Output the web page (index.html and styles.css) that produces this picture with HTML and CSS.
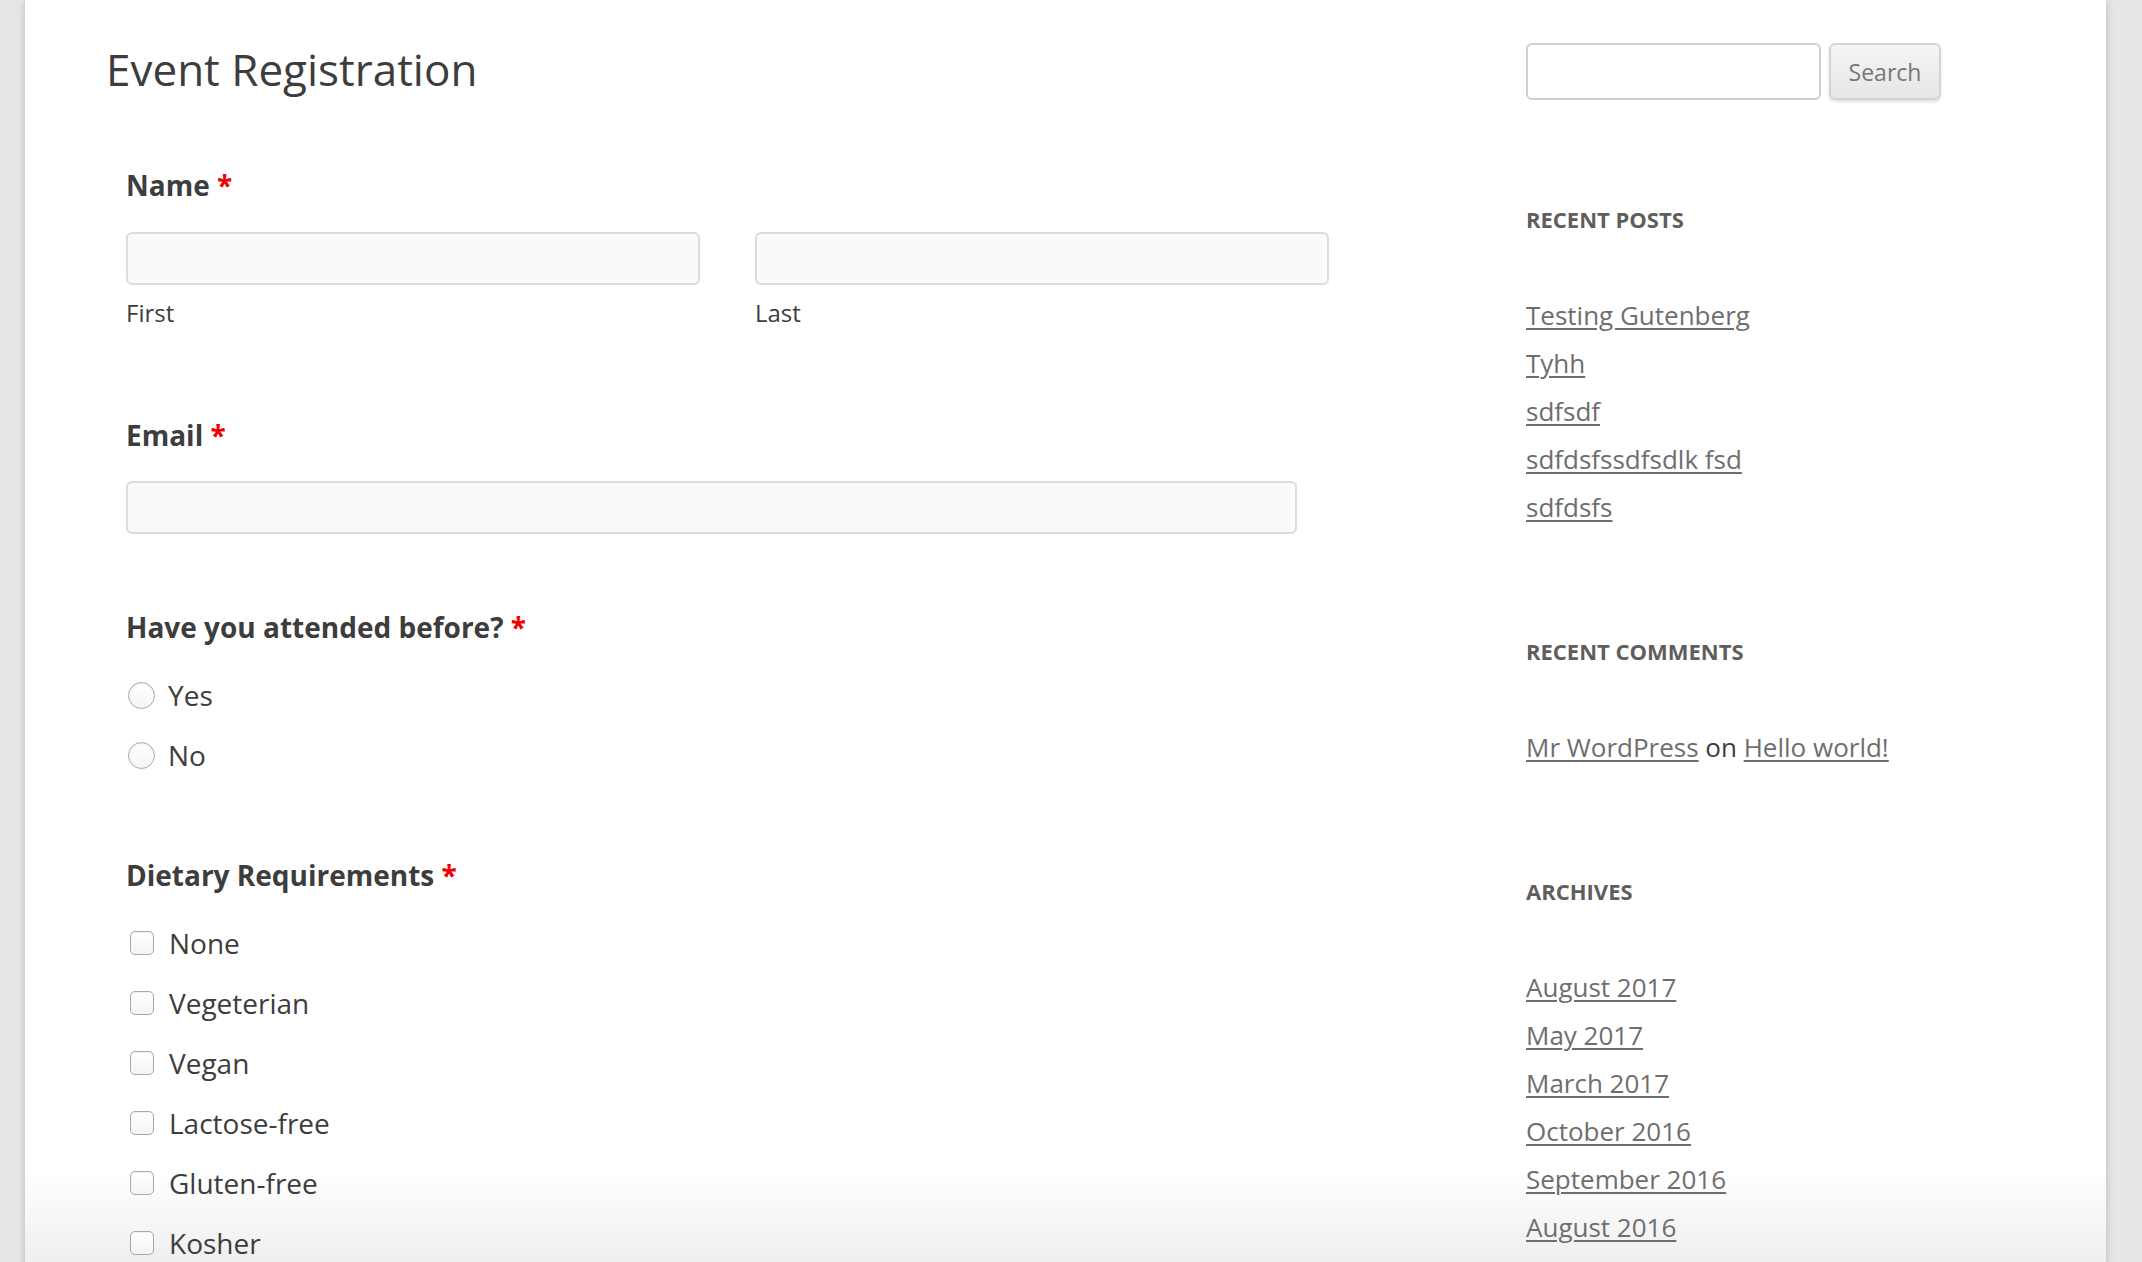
FILE: index.html
```html
<!DOCTYPE html>
<html lang="en">
<head>
<meta charset="utf-8">
<title>Event Registration</title>
<link rel="stylesheet" href="styles.css">
</head>
<body>
<div class="page">
  <main class="content">
    <h1 class="entry-title">Event Registration</h1>
    <form class="gform">
      <div class="field field-name">
        <label class="field-label">Name <span class="req">*</span></label>
        <div class="name-row">
          <div class="name-part">
            <input type="text" class="text-input">
            <span class="sublabel">First</span>
          </div>
          <div class="name-part">
            <input type="text" class="text-input">
            <span class="sublabel">Last</span>
          </div>
        </div>
      </div>
      <div class="field field-email">
        <label class="field-label">Email <span class="req">*</span></label>
        <input type="text" class="text-input email-input">
      </div>
      <div class="field field-radio">
        <label class="field-label">Have you attended before? <span class="req">*</span></label>
        <ul class="choices">
          <li class="choice"><input type="radio" class="radio" name="att"><span class="choice-text">Yes</span></li>
          <li class="choice"><input type="radio" class="radio" name="att"><span class="choice-text">No</span></li>
        </ul>
      </div>
      <div class="field field-check">
        <label class="field-label">Dietary Requirements <span class="req">*</span></label>
        <ul class="choices">
          <li class="choice"><input type="checkbox" class="check"><span class="choice-text">None</span></li>
          <li class="choice"><input type="checkbox" class="check"><span class="choice-text">Vegeterian</span></li>
          <li class="choice"><input type="checkbox" class="check"><span class="choice-text">Vegan</span></li>
          <li class="choice"><input type="checkbox" class="check"><span class="choice-text">Lactose-free</span></li>
          <li class="choice"><input type="checkbox" class="check"><span class="choice-text">Gluten-free</span></li>
          <li class="choice"><input type="checkbox" class="check"><span class="choice-text">Kosher</span></li>
        </ul>
      </div>
    </form>
  </main>
  <aside class="sidebar">
    <form class="search-form">
      <input type="text" class="search-input">
      <button type="button" class="search-btn">Search</button>
    </form>
    <section class="widget">
      <h3 class="widget-title">Recent Posts</h3>
      <ul class="widget-list">
        <li><a href="#">Testing Gutenberg</a></li>
        <li><a href="#">Tyhh</a></li>
        <li><a href="#">sdfsdf</a></li>
        <li><a href="#">sdfdsfssdfsdlk fsd</a></li>
        <li><a href="#">sdfdsfs</a></li>
      </ul>
    </section>
    <section class="widget">
      <h3 class="widget-title">Recent Comments</h3>
      <ul class="widget-list">
        <li><a href="#">Mr WordPress</a> on <a href="#">Hello world!</a></li>
      </ul>
    </section>
    <section class="widget">
      <h3 class="widget-title">Archives</h3>
      <ul class="widget-list">
        <li><a href="#">August 2017</a></li>
        <li><a href="#">May 2017</a></li>
        <li><a href="#">March 2017</a></li>
        <li><a href="#">October 2016</a></li>
        <li><a href="#">September 2016</a></li>
        <li><a href="#">August 2016</a></li>
      </ul>
    </section>
  </aside>
</div>
</body>
</html>
```
FILE: styles.css
```css
* { box-sizing: border-box; }

html, body {
  margin: 0;
  padding: 0;
  background: #e6e6e6;
  font-family: "Open Sans", "Noto Sans", sans-serif;
  color: #3d3d3d;
  overflow: hidden;
}

.page {
  margin: 0 36px 0 25px;
  background: linear-gradient(#fff 0, #fff 1170px, #efefef 1262px, #efefef 100%);
  min-height: 1400px;
  box-shadow: 0 2px 8px rgba(100, 100, 100, 0.35);
  padding: 43px 80px 0 81px;
  display: grid;
  grid-template-columns: 1338px 1fr;
  column-gap: 82px;
}

/* ---------- main content ---------- */
.entry-title {
  margin: 0;
  font-size: 44px;
  line-height: 52px;
  font-weight: 400;
  color: #3d3d3d;
}

.gform {
  padding-left: 20px;
}

.field-label {
  display: block;
  font-size: 28px;
  line-height: 40px;
  font-weight: 700;
  color: #3d3d3d;
}

.req {
  color: #e00;
}

.field-name { margin-top: 70px; }
.field-email { margin-top: 85px; }
.field-radio { margin-top: 73px; }
.field-check { margin-top: 70px; }

.name-row {
  display: flex;
  gap: 55px;
  margin-top: 27px;
}

.name-part {
  width: 574px;
  display: flex;
  flex-direction: column;
}

.text-input {
  display: block;
  width: 100%;
  height: 53px;
  background: #fafafa;
  border: 2px solid #dcdcdc;
  border-radius: 6px;
  font: inherit;
  margin: 0;
}

.sublabel {
  display: block;
  margin-top: 11px;
  font-size: 24px;
  line-height: 34px;
  color: #3d3d3d;
}

.email-input {
  width: 1171px;
  margin-top: 26px;
}

.choices {
  list-style: none;
  margin: 18px 0 0;
  padding: 0;
}

.choice {
  display: flex;
  align-items: center;
  height: 60px;
  font-size: 28px;
  line-height: 60px;
  color: #3d3d3d;
}

.radio {
  appearance: none;
  -webkit-appearance: none;
  width: 27px;
  height: 27px;
  margin: 0 13px 0 2px;
  border-radius: 50%;
  border: 1.5px solid #a9a9a9;
  background: linear-gradient(#fff, #f4f4f4);
  box-shadow: inset 0 1px 1px rgba(0, 0, 0, 0.08);
  flex: none;
}

.check {
  appearance: none;
  -webkit-appearance: none;
  width: 24px;
  height: 24px;
  margin: 0 15px 0 4px;
  border-radius: 5px;
  border: 1.5px solid #a9a9a9;
  background: linear-gradient(#fff, #f4f4f4);
  box-shadow: inset 0 1px 1px rgba(0, 0, 0, 0.06);
  flex: none;
}

/* ---------- sidebar ---------- */
.search-form {
  display: flex;
  gap: 8px;
  height: 57px;
}

.search-input {
  width: 295px;
  height: 57px;
  border: 2px solid #d0d0d0;
  border-radius: 6px;
  background: #fff;
  margin: 0;
}

.search-btn {
  width: 112px;
  height: 57px;
  margin: 0;
  border: 2px solid #d4d4d4;
  border-radius: 6px;
  background: linear-gradient(#f5f5f5, #e6e6e6);
  box-shadow: 0 2px 3px rgba(0, 0, 0, 0.12);
  font-family: "Open Sans", sans-serif;
  font-size: 23px;
  color: #777;
  padding: 0;
}

.widget {
  margin-top: 95px;
}

.widget + .widget {
  margin-top: 96px;
}

.widget-title {
  margin: 0 0 48px;
  font-size: 22px;
  line-height: 48px;
  font-weight: 700;
  text-transform: uppercase;
  color: #5e5e5e;
}

.widget-list {
  list-style: none;
  margin: 0;
  padding: 0;
}

.widget-list li {
  font-size: 26px;
  line-height: 48px;
  color: #3d3d3d;
}

.widget-list a {
  color: #6e6e6e;
  text-decoration: underline;
  text-decoration-thickness: 2px;
  text-underline-offset: 3px;
}
```
